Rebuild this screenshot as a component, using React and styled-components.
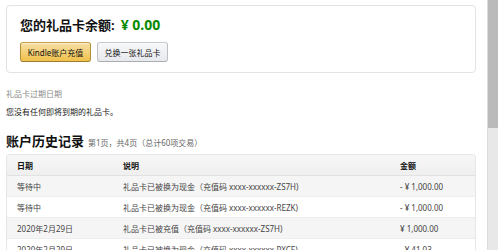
import styled, { createGlobalStyle } from "styled-components";

const GlobalStyle = createGlobalStyle`
  html, body {
    margin: 0;
    padding: 0;
    background: #fff;
    font-family: "Noto Sans", "Noto Sans CJK SC", sans-serif;
    color: #111;
    overflow: hidden;
  }
`;

const Page = styled.div`
  padding: 5px 24px 10px 6px;
`;

// drawn scrollbar, sits over the right edge of the window
const ScrollTrack = styled.div`
  position: fixed;
  top: 0;
  right: 2px;
  width: 10px;
  height: 100vh;
  background: #e8e8e8;
  border-left: 1px solid #dcdcdc;
`;

const ScrollThumb = styled.div`
  height: 128px;
  background: #bababa;
`;

const Card = styled.div`
  border: 1px solid #e3e3e3;
  border-radius: 4px;
  padding: 9px 13px 10px;
`;

const Balance = styled.h1`
  margin: 0;
  font-size: 13px;
  line-height: 20px;
  font-weight: 700;
  color: #111;
  display: flex;
  align-items: baseline;
  gap: 6px;
`;

const Amount = styled.span`
  color: #0a8a00;
  font-size: 14px;
`;

const Actions = styled.div`
  display: flex;
  gap: 6px;
  margin-top: 7px;
`;

const Button = styled.button`
  width: 71px;
  height: 20px;
  padding: 0;
  border-radius: 3px;
  border: 1px solid;
  font-family: inherit;
  font-size: 8px;
  color: #111;
  cursor: pointer;
  background: ${(p) =>
    p.$primary
      ? "linear-gradient(to bottom, #f7dfa5, #f0c14b)"
      : "linear-gradient(to bottom, #f7f8fa, #e7e9ec)"};
  border-color: ${(p) =>
    p.$primary ? "#c9a24a #b48f3a #a07e30" : "#c6c9ce #bcc0c5 #a9acb1"};
  box-shadow: 0 1px 0 rgba(255, 255, 255, 0.4) inset;
`;

const Label = styled.div`
  margin-top: 15px;
  font-size: 8px;
  line-height: 12px;
  color: #8a8a8a;
`;

const Note = styled.div`
  margin-top: 6px;
  font-size: 8px;
  line-height: 12px;
  color: #222;
`;

const HistoryHead = styled.div`
  margin-top: 13px;
  display: flex;
  align-items: baseline;
  gap: 4px;
`;

const HistoryTitle = styled.h2`
  margin: 0;
  font-size: 13px;
  line-height: 20px;
  font-weight: 700;
  color: #111;
`;

const PageInfo = styled.span`
  font-size: 8px;
  color: #666;
`;

const Table = styled.div`
  margin-top: 3px;
  border: 1px solid #e6e6e6;
  border-bottom: none;
  border-radius: 4px 4px 0 0;
  overflow: hidden;
`;

const Row = styled.div`
  display: grid;
  grid-template-columns: 106px 277px 1fr;
  height: 20px;
  align-items: center;
  font-size: 8px;
  color: ${(p) => (p.$head ? "#111" : "#444")};
  font-weight: ${(p) => (p.$head ? 700 : 400)};
  background: ${(p) =>
    p.$head
      ? "linear-gradient(to bottom, #f7f7f7, #efefef)"
      : p.$shade
      ? "#f5f5f5"
      : "#fff"};
  border-bottom: 1px solid ${(p) => (p.$head ? "#e2e2e2" : "#eeeeee")};
`;

const Cell = styled.div`
  padding-left: 10px;
  white-space: nowrap;
`;

const rows = [
  ["等待中", "礼品卡已被换为现金（充值码 xxxx-xxxxxx-ZS7H)", "- ¥ 1,000.00"],
  ["等待中", "礼品卡已被换为现金（充值码 xxxx-xxxxxx-REZK)", "- ¥ 1,000.00"],
  ["2020年2月29日", "礼品卡已被充值（充值码 xxxx-xxxxxx-ZS7H)", "¥ 1,000.00"],
  ["2020年2月29日", "礼品卡已被换为现金（充值码 xxxx-xxxxxx-PXCF)", "- ¥ 41.03"],
];

const App = () => {
  return (
    <>
      <GlobalStyle />
      <Page>
        <Card>
          <Balance>
            您的礼品卡余额:
            <Amount>¥ 0.00</Amount>
          </Balance>
          <Actions>
            <Button $primary>Kindle账户充值</Button>
            <Button>兑换一张礼品卡</Button>
          </Actions>
        </Card>
        <Label>礼品卡过期日期</Label>
        <Note>您没有任何即将到期的礼品卡。</Note>
        <HistoryHead>
          <HistoryTitle>账户历史记录</HistoryTitle>
          <PageInfo>第1页，共4页（总计60项交易）</PageInfo>
        </HistoryHead>
        <Table>
          <Row $head>
            <Cell>日期</Cell>
            <Cell>说明</Cell>
            <Cell>金额</Cell>
          </Row>
          {rows.map((r, i) => (
            <Row key={i} $shade={i % 2 === 0}>
              <Cell>{r[0]}</Cell>
              <Cell>{r[1]}</Cell>
              <Cell>{r[2]}</Cell>
            </Row>
          ))}
        </Table>
      </Page>
      <ScrollTrack>
        <ScrollThumb />
      </ScrollTrack>
    </>
  );
};

export default App;
